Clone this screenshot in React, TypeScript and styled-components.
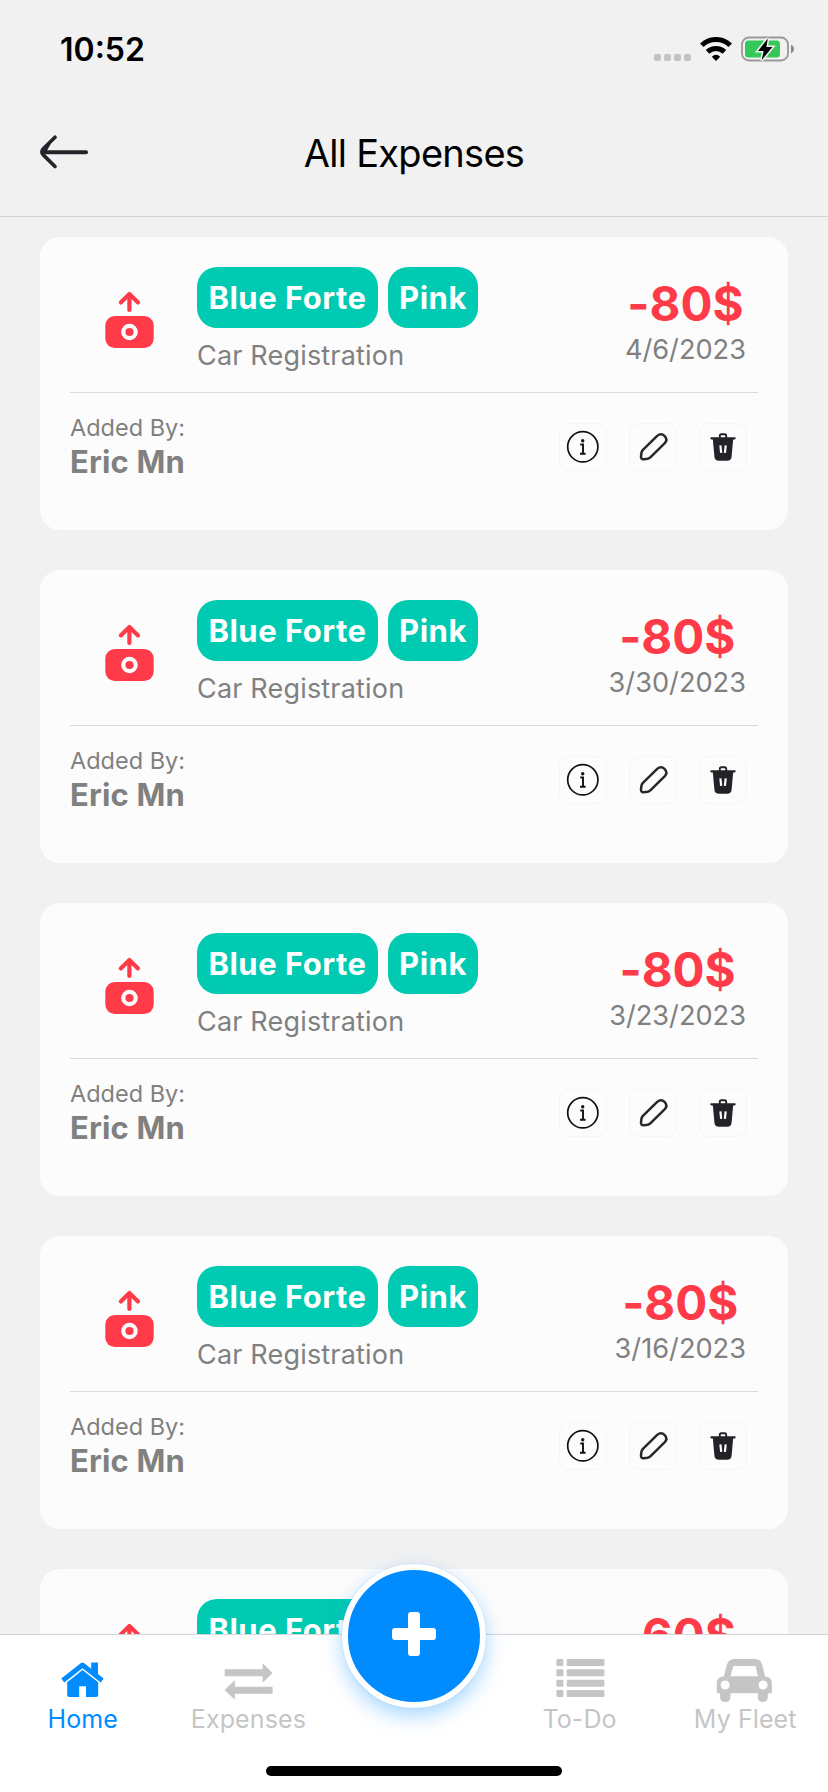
import React from "react";
import styled, { createGlobalStyle } from "styled-components";

const GlobalStyle = createGlobalStyle`
  * { box-sizing: border-box; }
  body { margin: 0; background: #f1f1f1; }
  svg { display: block; flex: none; }
`;

const Screen = styled.div`
  position: relative;
  width: 828px;
  height: 1792px;
  display: flex;
  flex-direction: column;
  overflow: hidden;
  background: #f1f1f1;
  font-family: Inter, "Liberation Sans", sans-serif;
  white-space: nowrap;
`;

const StatusBar = styled.div`
  height: 98px;
  flex: none;
  display: flex;
  align-items: center;
  justify-content: space-between;
  padding: 0 34px 0 60px;
`;

const Clock = styled.span`
  padding-top: 1px;
  font-size: 32px;
  font-weight: 600;
  color: #000;
`;

const StatusIcons = styled.div`
  display: flex;
  align-items: center;
`;

const SignalDots = styled.div`
  display: flex;
  gap: 3px;
  margin: 17px 9.5px 0 0;
`;

const Dot = styled.i`
  width: 7px;
  height: 7px;
  border-radius: 2px;
  background: #c3c3c3;
`;

const Header = styled.header`
  height: 119px;
  flex: none;
  display: grid;
  grid-template-columns: 1fr auto 1fr;
  align-items: center;
  padding: 0 40px 8px;
  border-bottom: 1px solid #d4d4d4;
`;

const Title = styled.h1`
  margin: 0;
  font-size: 38px;
  font-weight: 400;
  letter-spacing: -0.72px;
  color: #000;
`;

const List = styled.main`
  flex: 1;
  min-height: 0;
  overflow: hidden;
  display: flex;
  flex-direction: column;
  gap: 40px;
  padding: 20px 40px 0;
`;

const Card = styled.article`
  height: 293px;
  flex: none;
  padding: 30px;
  border-radius: 20px;
  background: #fcfcfc;
`;

const CardTop = styled.div`
  height: 126px;
  display: flex;
  border-bottom: 1px solid #d9dadb;
`;

const IconCell = styled.div`
  width: 119px;
  margin: 24px 8px 0 0;
  display: flex;
  justify-content: center;
`;

const Details = styled.div`
  flex: 1;
`;

const Tags = styled.div`
  display: flex;
  gap: 10px;
`;

const Tag = styled.span<{ $width: number }>`
  width: ${(p) => p.$width}px;
  height: 61px;
  line-height: 61px;
  border-radius: 20px;
  background: #00cab1;
  color: #fff;
  text-align: center;
  font-size: 31px;
  font-weight: 700;
  letter-spacing: 0.5px;
`;

const Category = styled.div`
  margin-top: 11px;
  font-size: 27px;
  line-height: 34px;
  letter-spacing: 0.18px;
  color: #808080;
`;

const Totals = styled.div`
  display: flex;
  flex-direction: column;
  align-items: center;
  padding: 13px 12px 0 0;
`;

const Amount = styled.div`
  font-size: 47.5px;
  line-height: 48px;
  font-weight: 700;
  font-feature-settings: "calt" 0;
  color: #ff3b49;
`;

const DateText = styled.div`
  margin-top: 5px;
  font-size: 27.2px;
  line-height: 34px;
  color: #808080;
`;

const CardBottom = styled.div`
  display: flex;
  justify-content: space-between;
`;

const Author = styled.div`
  padding-top: 21px;
  color: #808080;
`;

const AuthorLabel = styled.div`
  font-size: 23.5px;
  line-height: 28px;
`;

const AuthorName = styled.div`
  margin-top: 2px;
  font-size: 31px;
  line-height: 36px;
  font-weight: 700;
  letter-spacing: 0.15px;
`;

const Actions = styled.div`
  display: flex;
  gap: 22px;
  margin: 30px 11px 0 0;
`;

const ActionButton = styled.button`
  width: 48px;
  height: 48px;
  padding: 0;
  border: 1px solid #f4f4fb;
  border-radius: 10px;
  background: transparent;
  display: grid;
  place-items: center;
`;

const TabBar = styled.nav`
  height: 158px;
  flex: none;
  display: grid;
  grid-template-columns: repeat(5, 1fr);
  align-items: start;
  padding-top: 19px;
  border-top: 1px solid #d4d4d4;
  background: #fff;
`;

const Tab = styled.a<{ $active?: boolean }>`
  display: flex;
  flex-direction: column;
  align-items: center;
  font-size: 25px;
  line-height: 30px;
  letter-spacing: 0.1px;
  color: ${(p) => (p.$active ? "#008cff" : "#c5c5c5")};
`;

const AddButton = styled.button`
  position: absolute;
  left: 342px;
  top: 1564px;
  width: 144px;
  height: 144px;
  padding: 0;
  border: 6px solid #fff;
  border-radius: 50%;
  background: #008cff;
  box-shadow: 0 0 1px rgba(0, 140, 255, 0.5), 0 8px 20px rgba(0, 140, 255, 0.35);
  display: grid;
  place-items: center;
`;

const HomeIndicator = styled.div`
  position: absolute;
  left: 266px;
  bottom: 16px;
  width: 296px;
  height: 10px;
  border-radius: 5px;
  background: #000;
`;

const WifiIcon = () => (
  <svg width="32" height="24" viewBox="0 0 32 24" fill="none" stroke="#000" strokeWidth="5">
    <path d="M1.8 8.2A20.5 20.5 0 0 1 30.2 8.2" />
    <path d="M7.6 14.9A12 12 0 0 1 24.4 14.9" />
    <path d="M16 24L11.8 19.8Q16 15.8 20.2 19.8Z" fill="#000" stroke="none" />
  </svg>
);

const BatterySvg = styled.svg`
  margin-left: 9px;
`;

const BatteryIcon = () => (
  <BatterySvg width="53" height="26" viewBox="0 0 53 26">
    <rect x="1" y="1.5" width="46" height="23" rx="7" fill="none" stroke="#999" strokeWidth="1.8" />
    <path d="M50 8.8Q53 10 53 13T50 17.4Z" fill="#8a8a8a" />
    <rect x="4" y="4.5" width="35" height="17" rx="3.5" fill="#34c759" />
    <path
      d="M26.8 2.5L17 15H22.7L20.6 24.3L31.4 11H25.4Z"
      fill="#000"
      stroke="#f1f1f1"
      strokeWidth="3.2"
      paintOrder="stroke"
    />
  </BatterySvg>
);

const BackSvg = styled.svg`
  margin-top: -2px;
`;

const BackIcon = () => (
  <BackSvg width="48" height="34" viewBox="0 0 48 34" fill="none" stroke="#212529" strokeLinecap="round" strokeLinejoin="round">
    <path d="M3 17.3H46" strokeWidth="4" />
    <path d="M15 2.2L3 14Q0.8 17 3 19.6L15 31.5" strokeWidth="3.6" />
    <path d="M3 15L11 7.5L6 16.5Z" fill="#212529" strokeWidth="1" />
  </BackSvg>
);

const ExpenseIcon = () => (
  <svg width="49" height="58" viewBox="0 0 49 58" fill="none">
    <path
      d="M24.4 19V3M15.8 11.4L24.4 3L33 11.4"
      stroke="#ff3b49"
      strokeWidth="4.2"
      strokeLinecap="round"
      strokeLinejoin="round"
    />
    <rect x="0.3" y="25" width="48.4" height="32" rx="9.5" fill="#ff3b49" />
    <circle cx="24.5" cy="41" r="6.2" stroke="#fcfcfc" strokeWidth="4.2" />
  </svg>
);

const InfoIcon = () => (
  <svg width="46" height="46" viewBox="1 1 46 46" fill="none" stroke="#111" strokeWidth="1.7">
    <circle cx="23.8" cy="23.8" r="15.1" />
    <circle cx="23.7" cy="17.8" r="1.7" fill="#111" stroke="none" />
    <path d="M21.3 21.5H24V30.7M21 30.7H26.6" strokeWidth="1.9" />
  </svg>
);

const EditIcon = () => (
  <svg width="46" height="46" viewBox="1 1 46 46" fill="none" stroke="#26282b" strokeWidth="2.5" strokeLinejoin="round">
    <path d="M28.2 12.9L13.9 26.9C13.1 27.8 12.6 28.8 12.4 30L12 33.6C11.9 35.4 13 36.4 14.7 36.2L18.6 35.7C19.8 35.5 20.8 35 21.6 34.2L35.8 20.1C37.8 17.9 37.7 15.2 35.7 13.1C33.6 10.9 30.6 10.8 28.2 12.9Z" />
  </svg>
);

const DeleteIcon = () => (
  <svg width="46" height="46" viewBox="1 1 46 46" fill="none" stroke="#212328">
    <path d="M12.4 15.3H35.6" strokeWidth="2.2" strokeLinecap="round" />
    <path d="M20.8 15V12.8Q20.8 11.2 22.4 11.2H25.6Q27.2 11.2 27.2 12.8V15" strokeWidth="1.9" />
    <path d="M13.8 16H34.2L32.6 33.5Q32.2 37.8 28 37.8H20Q15.8 37.8 15.4 33.5Z" fill="#212328" stroke="none" />
    <path d="M21.4 22.4L22.2 29.8M26.7 22.4L25.9 29.8" stroke="#fcfcfc" strokeWidth="2.2" />
  </svg>
);

const HomeIcon = () => (
  <svg width="60" height="50" viewBox="0 0 60 50" fill="currentColor">
    <path d="M38.2 8.6H45V24L38.2 18.5Z" />
    <path d="M9.8 26.5L29.5 11L49.2 26.5" fill="none" stroke="currentColor" strokeWidth="4.8" strokeLinejoin="round" />
    <path d="M29.5 16L45.2 28.3V41Q45.2 43 43.2 43H33V32.2H26.2V43H16.2Q14.2 43 14.2 41V28.3Z" />
  </svg>
);

const TransferIcon = () => (
  <svg width="60" height="50" viewBox="0 0 60 50" fill="currentColor" stroke="currentColor" strokeWidth="1" strokeLinejoin="round">
    <path d="M7.1 15.8H45.1V10.2L54.1 19L45.1 27.8V21.8H7.1Z" />
    <path d="M54.1 33.2H16.4V27.2L7.1 36L16.4 44.8V39.2H54.1Z" />
  </svg>
);

const ListIcon = () => (
  <svg width="60" height="50" viewBox="0 0 60 50" fill="currentColor">
    {[5, 15.3, 25.7, 36].map((y) => (
      <g key={y}>
        <rect x="6.4" y={y} width="7" height="7" rx="1" />
        <rect x="16.7" y={y} width="37.7" height="7" rx="1" />
      </g>
    ))}
  </svg>
);

const CarIcon = () => (
  <svg width="60" height="50" viewBox="0 0 60 50" fill="currentColor">
    <path
      fillRule="evenodd"
      d="M8.9 22.3L11.8 11Q13.3 5 19.3 5H40Q46 5 47.3 11L50 22.3Q56.8 22.9 56.8 29.5V38.3Q56.8 39.3 55.8 39.3H52.8V43Q52.8 48 47.8 48T42.8 43V39.3H15.5V43Q15.5 48 10.3 48T5.1 43V39.3H2.8Q1.8 39.3 1.8 38.3V29.5Q1.8 22.9 8.9 22.3ZM18.3 12L15.6 22.2H43L40.6 12ZM10.1 26.5A4.5 4.5 0 1 0 10.1 35.5A4.5 4.5 0 1 0 10.1 26.5ZM48.1 26.5A4.5 4.5 0 1 0 48.1 35.5A4.5 4.5 0 1 0 48.1 26.5Z"
    />
  </svg>
);

const PlusSvg = styled.svg`
  margin-top: -4px;
`;

const PlusIcon = () => (
  <PlusSvg width="44" height="44" viewBox="0 0 44 44" fill="#fff">
    <rect x="16" y="0" width="12" height="44" rx="3" />
    <rect x="0" y="16" width="44" height="12" rx="3" />
  </PlusSvg>
);

const expenses = [
  { amount: "-80$", date: "4/6/2023" },
  { amount: "-80$", date: "3/30/2023" },
  { amount: "-80$", date: "3/23/2023" },
  { amount: "-80$", date: "3/16/2023" },
  { amount: "-60$", date: "2/23/2023" },
];

const ExpenseCard = ({ amount, date }: { amount: string; date: string }) => (
  <Card>
    <CardTop>
      <IconCell>
        <ExpenseIcon />
      </IconCell>
      <Details>
        <Tags>
          <Tag $width={181}>Blue Forte</Tag>
          <Tag $width={90}>Pink</Tag>
        </Tags>
        <Category>Car Registration</Category>
      </Details>
      <Totals>
        <Amount>{amount}</Amount>
        <DateText>{date}</DateText>
      </Totals>
    </CardTop>
    <CardBottom>
      <Author>
        <AuthorLabel>Added By:</AuthorLabel>
        <AuthorName>Eric Mn</AuthorName>
      </Author>
      <Actions>
        <ActionButton aria-label="Info"><InfoIcon /></ActionButton>
        <ActionButton aria-label="Edit"><EditIcon /></ActionButton>
        <ActionButton aria-label="Delete"><DeleteIcon /></ActionButton>
      </Actions>
    </CardBottom>
  </Card>
);

export default function App() {
  return (
    <Screen>
      <GlobalStyle />
      <StatusBar>
        <Clock>10:52</Clock>
        <StatusIcons>
          <SignalDots>
            <Dot /><Dot /><Dot /><Dot />
          </SignalDots>
          <WifiIcon />
          <BatteryIcon />
        </StatusIcons>
      </StatusBar>
      <Header>
        <BackIcon />
        <Title>All Expenses</Title>
      </Header>
      <List>
        {expenses.map((e) => (
          <ExpenseCard key={e.date} {...e} />
        ))}
      </List>
      <TabBar>
        <Tab $active><HomeIcon />Home</Tab>
        <Tab><TransferIcon />Expenses</Tab>
        <span />
        <Tab><ListIcon />To-Do</Tab>
        <Tab><CarIcon />My Fleet</Tab>
      </TabBar>
      <AddButton aria-label="Add expense"><PlusIcon /></AddButton>
      <HomeIndicator />
    </Screen>
  );
}
